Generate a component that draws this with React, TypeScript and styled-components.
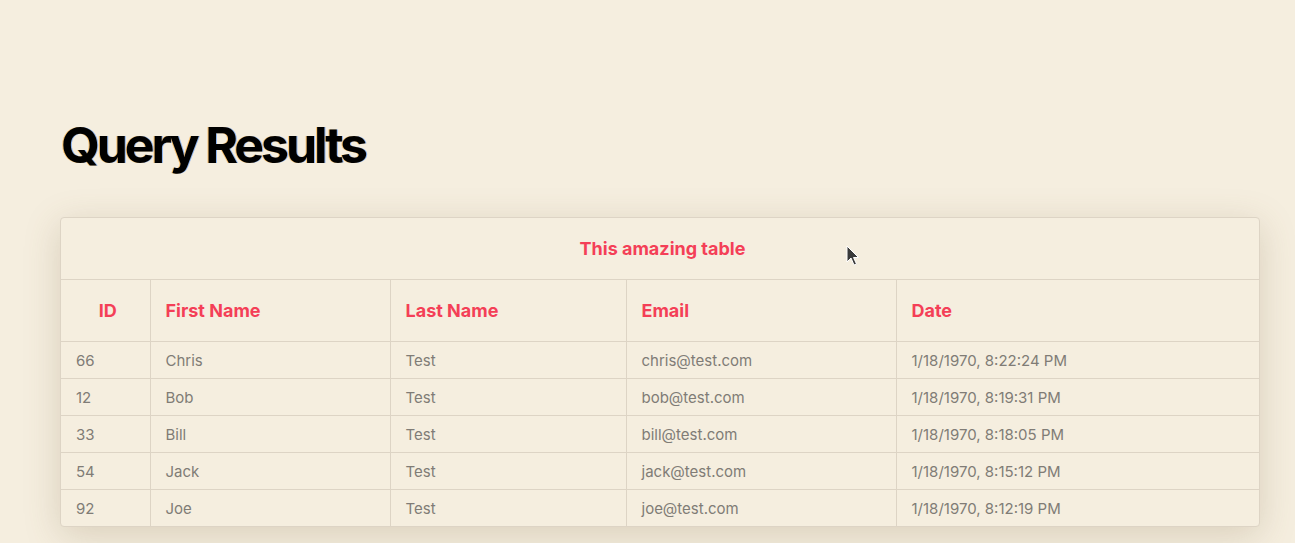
import React from "react";
import styled, { createGlobalStyle } from "styled-components";

const Global = createGlobalStyle`
  html, body { margin: 0; padding: 0; background: #f5eedf; }
  body { font-family: Inter, "Noto Sans", sans-serif; }
`;

const Page = styled.main`
  position: relative;
  min-height: 543px;
  box-sizing: border-box;
  padding: 110px 36px 0 60px;
  background: #f5eedf;
`;

const Title = styled.h1`
  margin: 0 0 37px 1px;
  font-family: Inter, sans-serif;
  font-weight: 700;
  font-size: 50px;
  line-height: 70px;
  letter-spacing: -0.062em;
  color: #000;
  text-shadow: -1px 0 rgba(255, 160, 20, 0.55), 1px 0 rgba(20, 110, 255, 0.45);
`;

const Card = styled.div`
  width: 1198px;
  border: 1px solid #ddd4c5;
  border-radius: 4px;
  overflow: hidden;
  background: #f5eedf;
  box-shadow: 0 8px 36px rgba(120, 95, 60, 0.22);
`;

const Table = styled.table`
  width: 100%;
  border-collapse: collapse;
  table-layout: fixed;
  font-family: Inter, sans-serif;
`;

const Caption = styled.caption`
  height: 61px;
  line-height: 61px;
  padding-left: 5px;
  font-size: 18px;
  font-weight: 700;
  color: #f43f57;
  text-align: center;
  border-bottom: 1px solid #ddd4c5;
`;

const Th = styled.th<{ $center?: boolean }>`
  height: 61px;
  padding: ${(p) => (p.$center ? "0 15px 0 20px" : "0 15px")};
  text-align: ${(p) => (p.$center ? "center" : "left")};
  font-size: 18px;
  font-weight: 700;
  color: #f43f57;
  border-left: 1px solid #ddd4c5;
  border-bottom: 1px solid #ddd4c5;
  &:first-child { border-left: none; }
`;

const Td = styled.td`
  height: 36px;
  padding: 0 15px;
  font-size: 15px;
  color: #807c76;
  border-left: 1px solid #ddd4c5;
  border-top: 1px solid #ddd4c5;
  white-space: nowrap;
  &:first-child { border-left: none; }
`;

const Cursor = styled.svg`
  position: absolute;
  left: 846px;
  top: 245px;
  width: 14px;
  height: 22px;
`;

const rows = [
  ["66", "Chris", "Test", "chris@test.com", "1/18/1970, 8:22:24 PM"],
  ["12", "Bob", "Test", "bob@test.com", "1/18/1970, 8:19:31 PM"],
  ["33", "Bill", "Test", "bill@test.com", "1/18/1970, 8:18:05 PM"],
  ["54", "Jack", "Test", "jack@test.com", "1/18/1970, 8:15:12 PM"],
  ["92", "Joe", "Test", "joe@test.com", "1/18/1970, 8:12:19 PM"],
];

const widths = [89, 240, 236, 270, 363];

export default function App() {
  return (
    <>
      <Global />
      <Page>
        <Title>Query Results</Title>
        <Card>
          <Table>
            <Caption>This amazing table</Caption>
            <colgroup>
              {widths.map((w, i) => (
                <col key={i} style={{ width: w }} />
              ))}
            </colgroup>
            <thead>
              <tr>
                <Th $center>ID</Th>
                <Th>First Name</Th>
                <Th>Last Name</Th>
                <Th>Email</Th>
                <Th>Date</Th>
              </tr>
            </thead>
            <tbody>
              {rows.map((r) => (
                <tr key={r[0]}>
                  {r.map((c, i) => (
                    <Td key={i}>{c}</Td>
                  ))}
                </tr>
              ))}
            </tbody>
          </Table>
        </Card>
        <Cursor viewBox="0 0 14 22">
          <path d="M1 1 L1 17 L5 13 L8 20 L10.5 19 L7.5 12.5 L12.5 12.5 Z" fill="#3a3a3a" stroke="#fff" strokeWidth="1" />
        </Cursor>
      </Page>
    </>
  );
}
